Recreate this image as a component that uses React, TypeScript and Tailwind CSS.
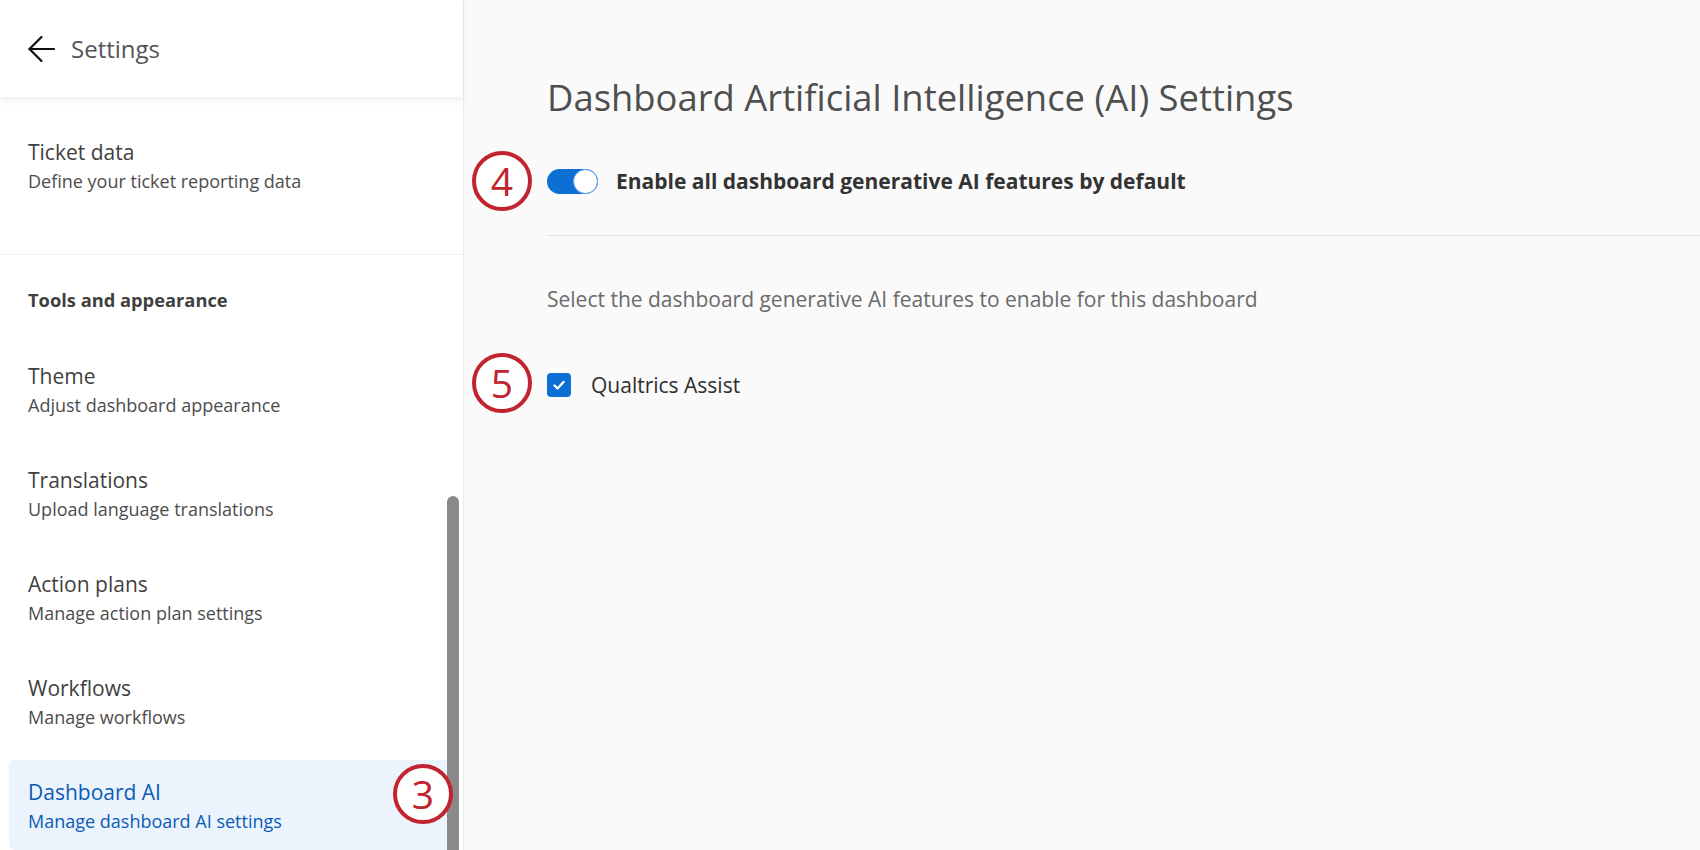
import React from "react";

function NavItem({ title, sub, active }: { title: string; sub: string; active?: boolean }) {
  return (
    <div className={active ? "rounded-[6px] bg-[#ebf3fd] pb-4 pl-[19px] pt-4" : "pb-4 pl-[19px] pt-4"}>
      <div className={active ? "text-[21px] leading-[32px] text-[#0b5cb5]" : "text-[21px] leading-[32px] text-[#3f3f3f]"}>
        {title}
      </div>
      <div className={active ? "text-[18px] leading-[26px] text-[#0b5cb5]" : "text-[18px] leading-[26px] text-[#4d4d4d]"}>
        {sub}
      </div>
    </div>
  );
}

function Marker({ n, className }: { n: string; className: string }) {
  return (
    <div
      className={
        "absolute flex h-[60px] w-[60px] items-center justify-center rounded-full border-[4px] border-[#c1232f] bg-white text-[39px] leading-none text-[#c1232f] " +
        className
      }
    >
      <span className="-mt-[2px]">{n}</span>
    </div>
  );
}

export default function App() {
  return (
    <div className="relative flex h-[850px] w-[1700px] overflow-hidden bg-[#fafafa] font-['Open_Sans',sans-serif]">
      <aside className="relative flex h-full w-[464px] shrink-0 flex-col border-r border-[#ececec] bg-white">
        <header className="relative z-10 flex h-[97px] shrink-0 items-center gap-4 bg-white pl-[28px] shadow-[0_3px_8px_rgba(0,0,0,0.07)]">
          <svg width="27" height="26" viewBox="0 0 27 26" fill="none" stroke="#111" strokeWidth="2.2" strokeLinecap="round" strokeLinejoin="round">
            <path d="M26 13H1.5" />
            <path d="M13.5 1L1.5 13L13.5 25" />
          </svg>
          <span className="text-[24px] leading-[32px] text-[#555555]">Settings</span>
        </header>

        <div className="mt-[23px] pl-[9px] pr-[5px]">
          <NavItem title="Ticket data" sub="Define your ticket reporting data" />
        </div>

        <div className="mt-[44px] h-px bg-[#f0f0f0]" />

        <div className="mt-[32px] pl-[28px] text-[18.3px] font-bold leading-[26px] text-[#3f3f3f]">Tools and appearance</div>

        <div className="mt-[31px] flex flex-col gap-[14px] pl-[9px] pr-[5px]">
          <NavItem title="Theme" sub="Adjust dashboard appearance" />
          <NavItem title="Translations" sub="Upload language translations" />
          <NavItem title="Action plans" sub="Manage action plan settings" />
          <NavItem title="Workflows" sub="Manage workflows" />
          <NavItem title="Dashboard AI" sub="Manage dashboard AI settings" active />
        </div>

        <div className="absolute left-[447px] top-[496px] h-[400px] w-[12px] rounded-t-full bg-[#8a8a8a]" />
      </aside>

      <main className="flex flex-1 flex-col pl-[83px] pt-[73px]">
        <h1 className="text-[36.4px] leading-[48px] text-[#4f4f4f]">Dashboard Artificial Intelligence (AI) Settings</h1>

        <div className="mt-[47px] flex h-[26px] items-center gap-[18px]">
          <div className="flex h-[25px] w-[51px] items-center justify-end rounded-full bg-[#0b6fd3]">
            <div className="h-[25px] w-[25px] rounded-full border-[1.5px] border-[#5d9fe3] bg-white" />
          </div>
          <span className="text-[21px] font-bold leading-[26px] text-[#333333]">
            Enable all dashboard generative AI features by default
          </span>
        </div>

        <div className="mt-[41px] h-px bg-[#e6e6e6]" />

        <div className="mt-[49px] text-[21px] leading-[28px] text-[#6b6b6b]">
          Select the dashboard generative AI features to enable for this dashboard
        </div>

        <div className="mt-[58px] flex h-[28px] items-center gap-[20px]">
          <div className="flex h-[24px] w-[24px] items-center justify-center rounded-[4px] bg-[#0b6fd3]">
            <svg width="14" height="14" viewBox="0 0 14 14" fill="none" stroke="white" strokeWidth="2.4" strokeLinecap="round" strokeLinejoin="round">
              <path d="M2.5 7.5L5.5 10.5L11.5 4" />
            </svg>
          </div>
          <span className="text-[21px] leading-[28px] text-[#2e2e2e]">Qualtrics Assist</span>
        </div>
      </main>

      <Marker n="4" className="left-[472px] top-[151px]" />
      <Marker n="5" className="left-[472px] top-[353px]" />
      <Marker n="3" className="left-[393px] top-[764px]" />
    </div>
  );
}
